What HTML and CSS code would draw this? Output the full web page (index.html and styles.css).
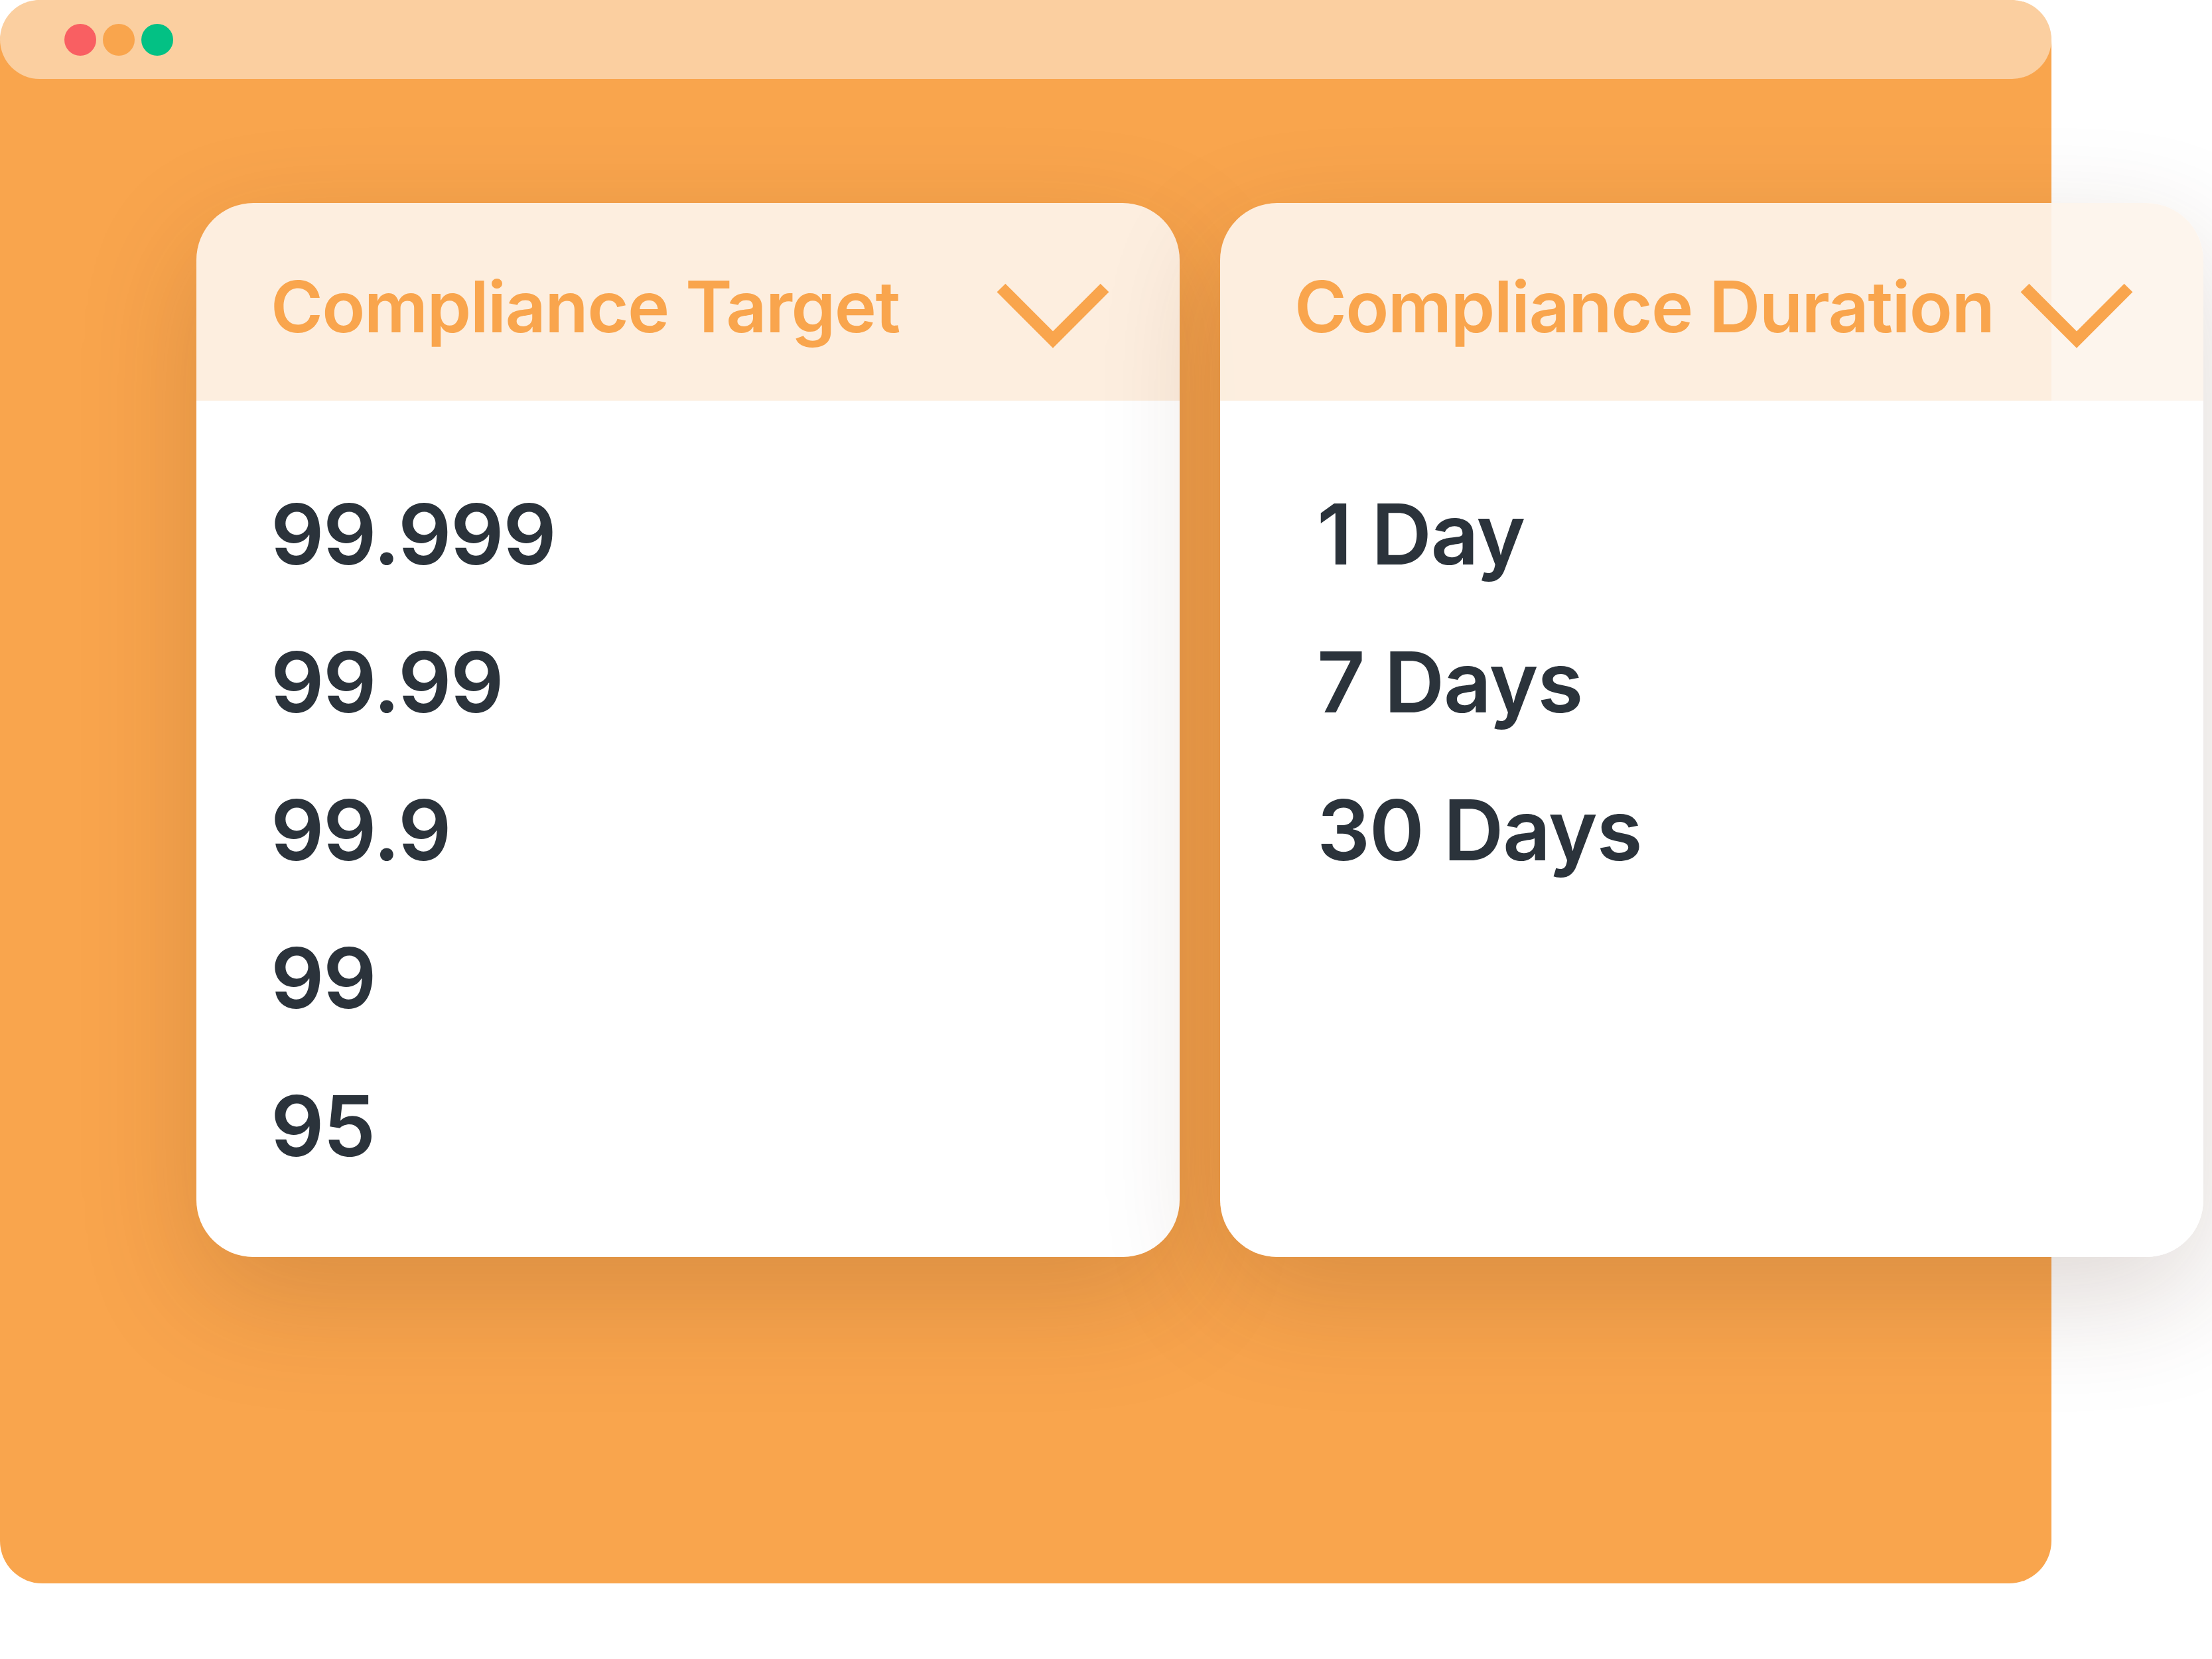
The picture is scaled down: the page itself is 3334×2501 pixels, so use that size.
FILE: index.html
```html
<!DOCTYPE html>
<html lang="en">
<head>
<meta charset="utf-8">
<title>Compliance</title>
<link rel="stylesheet" href="styles.css">
</head>
<body>
<div class="window">
  <div class="titlebar">
    <span class="dot dot-red"></span>
    <span class="dot dot-orange"></span>
    <span class="dot dot-green"></span>
  </div>
  <div class="cards">
    <section class="card">
      <div class="card-header">
        <span class="card-title">Compliance Target</span>
        <svg class="chevron" viewBox="0 0 172 100" width="172" height="100"><path d="M9 9 L87 87 L165 9" fill="none" stroke="#F9A54D" stroke-width="18" stroke-linecap="butt" stroke-linejoin="miter"/></svg>
      </div>
      <ul class="options options-target">
        <li>99.999</li>
        <li>99.99</li>
        <li>99.9</li>
        <li>99</li>
        <li>95</li>
      </ul>
    </section>
    <section class="card">
      <div class="card-header">
        <span class="card-title">Compliance Duration</span>
        <svg class="chevron" viewBox="0 0 172 100" width="172" height="100"><path d="M9 9 L87 87 L165 9" fill="none" stroke="#F9A54D" stroke-width="18" stroke-linecap="butt" stroke-linejoin="miter"/></svg>
      </div>
      <ul class="options options-duration">
        <li>1 Day</li>
        <li>7 Days</li>
        <li>30 Days</li>
      </ul>
    </section>
  </div>
</div>
</body>
</html>
```
FILE: styles.css
```css
html, body {
  margin: 0;
  padding: 0;
  background: #ffffff;
}
body {
  width: 3334px;
  height: 2501px;
  overflow: hidden;
  font-family: Inter, "Noto Sans", "Liberation Sans", sans-serif;
}
.window {
  width: 3092px;
  height: 2387px;
  background: #F9A54D;
  border-radius: 64px;
}
.titlebar {
  height: 119px;
  background: #FBCFA0;
  border-radius: 60px;
  display: flex;
  align-items: center;
  gap: 10px;
  padding-left: 97px;
  box-sizing: border-box;
}
.dot {
  width: 48px;
  height: 48px;
  border-radius: 50%;
}
.dot-red { background: #F95F62; }
.dot-orange { background: #F9A54D; }
.dot-green { background: #03C184; }
.cards {
  display: flex;
  gap: 61px;
  margin-top: 187px;
  padding-left: 296px;
}
.card {
  flex: none;
  width: 1482px;
  height: 1589px;
  border-radius: 86px;
  overflow: hidden;
  display: flex;
  flex-direction: column;
  box-shadow: 0 60px 180px rgba(80, 40, 20, 0.18);
}
.card-header {
  height: 298px;
  box-sizing: border-box;
  padding: 103px 106px 0 112px;
  display: flex;
  justify-content: space-between;
  align-items: flex-start;
  background: rgba(253, 244, 236, 0.92);
}
.card-title {
  font-size: 107px;
  line-height: 107px;
  font-weight: 600;
  letter-spacing: -1.6px;
  color: #F9A54D;
  white-space: nowrap;
}
.chevron {
  display: block;
  margin-top: 16px;
  flex: none;
}
.options {
  flex: 1;
  margin: 0;
  list-style: none;
  background: #ffffff;
  padding: 90px 0 0 0;
  color: #2B333B;
  font-size: 126px;
  line-height: 223px;
  font-weight: 600;
  letter-spacing: -1.5px;
}
.options-target { padding-left: 112px; }
.options-duration { padding-left: 146px; }
```
